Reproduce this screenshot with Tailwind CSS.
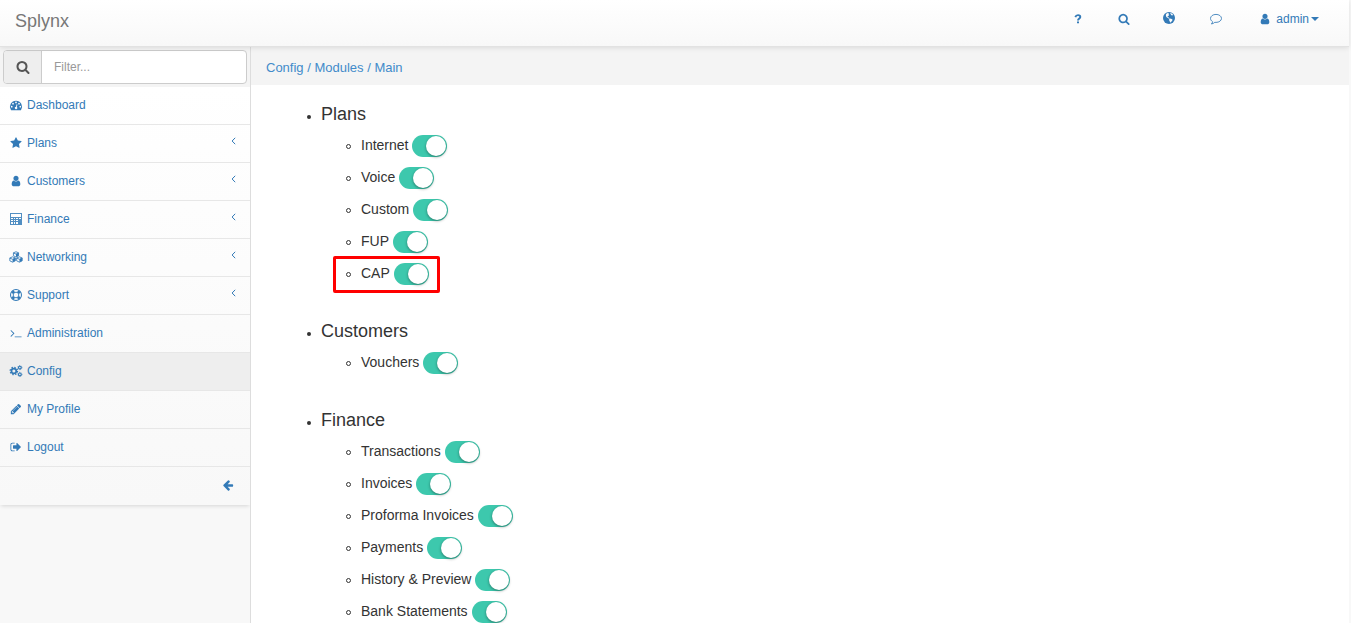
<!DOCTYPE html>
<html lang="en">
<head>
<meta charset="utf-8">
<title>Splynx</title>
<script src="https://cdn.jsdelivr.net/npm/@tailwindcss/browser@4"></script>
</head>
<body class="h-[623px] overflow-hidden bg-[#f8f8f8] font-['Liberation_Sans',Arial,sans-serif] text-[14px] leading-5 text-[#333]">
<svg class="hidden">
  <symbol id="search" viewBox="0 0 1792 1792"><path d="M1216 832q0-185-131.5-316.5t-316.5-131.5-316.5 131.5-131.5 316.5 131.5 316.5 316.5 131.5 316.5-131.5 131.5-316.5zm512 832q0 52-38 90t-90 38q-54 0-90-38l-343-342q-179 124-399 124-143 0-273.5-55.5t-225-150-150-225-55.5-273.5 55.5-273.5 150-225 225-150 273.5-55.5 273.5 55.5 225 150 150 225 55.5 273.5q0 220-124 399l343 343q37 37 37 90z"/></symbol>
  <symbol id="star" viewBox="0 0 1792 1792"><path d="M1728 647q0 22-26 48l-363 354 86 500q1 7 1 20 0 21-10.5 35.5t-30.5 14.5q-19 0-40-12l-449-236-449 236q-22 12-40 12-21 0-31.5-14.5t-10.5-35.5q0-6 2-20l86-500-364-354q-25-27-25-48 0-37 56-46l502-73 225-455q19-41 49-41t49 41l225 455 502 73q56 9 56 46z"/></symbol>
  <symbol id="user" viewBox="0 0 1792 1792"><path d="M1536 1399q0 109-62.5 187t-150.5 78h-854q-88 0-150.5-78t-62.5-187q0-85 8.5-160.5t31.5-152 58.5-131 94-89 134.5-34.5q131 128 313 128t313-128q76 0 134.5 34.5t94 89 58.5 131 31.5 152 8.5 160.5zm-256-887q0 159-112.5 271.5t-271.5 112.5-271.5-112.5-112.5-271.5 112.5-271.5 271.5-112.5 271.5 112.5 112.5 271.5z"/></symbol>
  <symbol id="left" viewBox="0 0 1792 1792"><path d="M1664 896v128q0 53-32.5 90.5t-84.5 37.5h-704l293 294q38 36 38 90t-38 90l-75 76q-37 37-90 37-52 0-91-37l-651-652q-37-37-37-90 0-52 37-91l651-650q38-38 91-38 52 0 90 38l75 74q38 38 38 91t-38 91l-293 293h704q52 0 84.5 37.5t32.5 90.5z"/></symbol>
  <symbol id="pencil" viewBox="0 0 1792 1792"><path d="M491 1536l91-91-235-235-91 91v107h128v128h107zm523-928q0-22-22-22-10 0-17 7l-542 542q-7 7-7 17 0 22 22 22 10 0 17-7l542-542q7-7 7-17zm-54-192l416 416-832 832h-416v-416zm683 96q0 53-37 90l-166 166-416-416 166-165q36-38 90-38 53 0 91 38l235 234q37 39 37 91z"/></symbol>
  <symbol id="logout" viewBox="0 0 1792 1792"><path d="M704 1440q0 4 1 20t.5 26.5-3 23.5-10 19.5-20.5 6.5h-320q-119 0-203.5-84.5t-84.5-203.500v-704q0-119 84.500-203.500t203.500-84.500h320q13 0 22.500 9.500t9.500 22.500q0 4 1 20t.5 26.500-3 23.500-10 19.500-20.500 6.500h-320q-66 0-113 47t-47 113v704q0 66 47 113t113 47h312l11.500 1 11.500 3 8 5.500 7 9 2 13.500zm928-544q0 26-19 45l-544 544q-19 19-45 19t-45-19-19-45v-288h-448q-26 0-45-19t-19-45v-384q0-26 19-45t45-19h448v-288q0-26 19-45t45-19 45 19l544 544q19 19 19 45z"/></symbol>
  <symbol id="terminal" viewBox="0 0 1792 1792"><path d="M649 983l-466 466q-10 10-23 10t-23-10l-50-50q-10-10-10-23t10-23l393-393-393-393q-10-10-10-23t10-23l50-50q10-10 23-10t23 10l466 466q10 10 10 23t-10 23zm1079 457v64q0 14-9 23t-23 9h-960q-14 0-23-9t-9-23v-64q0-14 9-23t23-9h960q14 0 23 9t9 23z"/></symbol>
  <symbol id="dash" viewBox="0 0 14 14"><path fill-rule="evenodd" d="M7 2a7 7 0 0 0-5.900 10.800q.2.200.5.200h10.800q.3 0 .5-.2A7 7 0 0 0 7 2zM2 8a1 1 0 1 0 0 2 1 1 0 0 0 0-2zm1.500-3.500a1 1 0 1 0 0 2 1 1 0 0 0 0-2zM7 3a1 1 0 1 0 0 2 1 1 0 0 0 0-2zm3.500 1.500a1 1 0 1 0 0 2 1 1 0 0 0 0-2zM12 8a1 1 0 1 0 0 2 1 1 0 0 0 0-2zM7.700 6.200 7 8.900a1.500 1.500 0 1 0 1 .3l.7-2.700z"/></symbol>
  <symbol id="calc" viewBox="0 0 12 12"><path fill-rule="evenodd" d="M0 0h12v12H0zM1 1v3h10V1zM1 5v1h2V5zM4 5v1h1V5zM6 5v1h2V5zM9 5v1h2V5zM1 7v1h2V7zM4 7v1h1V7zM6 7v1h2V7zM1 9v2h2V9zM4 9v2h1V9zM6 9v2h2V9z" opacity=".85"/></symbol>
  <symbol id="cubes" viewBox="0 0 16 14"><g fill="none" stroke="currentColor" stroke-width="1" stroke-linejoin="round"><path d="M8 .9l3 1.200v3.400L8 7 5 5.500V2.100zM4 6.800l3.200 1.300v3.400L4 13 .8 11.500V8.100zM12 6.800l3.200 1.300v3.400L12 13l-3.200-1.500V8.100z"/><path d="M5 2.300l3 1.300 3-1.300M.8 8.300L4 9.600l3.200-1.300M8.800 8.300l3.200 1.300 3.200-1.300"/><path stroke="none" fill="currentColor" d="M8 3.600l3-1.300v3.200L8 7zM4 9.600l3.200-1.300v3.200L4 13zM12 9.600l3.200-1.300v3.200L12 13z"/></g></symbol>
  <symbol id="life" viewBox="0 0 14 14"><g fill="none" stroke="currentColor"><circle cx="7" cy="7" r="6.400" stroke-width="1.200"/><circle cx="7" cy="7" r="3.300" stroke-width="1.100"/><path stroke-width="3.400" d="M2.700 2.700l1.900 1.900M11.300 2.700L9.400 4.600M2.700 11.300l1.900-1.900M11.300 11.300L9.400 9.400"/></g></symbol>
  <symbol id="cogs" viewBox="0 0 15 14"><g fill="none" stroke="currentColor"><circle cx="5" cy="7" r="2.800" stroke-width="2"/><circle cx="5" cy="7" r="4.300" stroke-width="1.500" stroke-dasharray="1.690"/><circle cx="12" cy="3" r="1.600" stroke-width="1.300"/><circle cx="12" cy="3" r="2.400" stroke-width="1" stroke-dasharray=".94"/><circle cx="12" cy="11" r="1.600" stroke-width="1.300"/><circle cx="12" cy="11" r="2.400" stroke-width="1" stroke-dasharray=".94"/></g></symbol>
  <symbol id="globe" viewBox="0 0 12 12"><circle cx="6" cy="6" r="6"/><path fill="#fcfcfc" d="M3.300 1.700l1.500-.6 1.200.3-.6.9.8.500-.6 1-1 .4.100.8 1.100.5.800 1.100-.9-.1-1.200-.8L3.300 4.900 2.800 3zM7 1.100l1.800.5 1.300 1.200-.8.700-.9-.2-.5-.9zM6.600 6.500l1.500.2 1.400.9-.3 1.200-1.200 1.100-.8.900-.5-1.500-.7-1.300z"/></symbol>
  <symbol id="comment" viewBox="0 0 12 12"><path fill="none" stroke="currentColor" stroke-width=".85" stroke-linejoin="round" d="M6 1.400c3.100 0 5.500 1.800 5.500 4s-2.400 4-5.500 4l-1.200-.1C3.900 10.200 2.900 10.700 1.400 11c.7-.7 1.100-1.400 1.200-2.300C1.300 7.900.5 6.700.5 5.400c0-2.200 2.400-4 5.500-4z"/></symbol>
  <symbol id="question" viewBox="0 0 8 10"><path fill="none" stroke="currentColor" stroke-width="1.900" d="M1.300 3.100C1.800 1.700 2.700 1.100 4 1.100c1.500 0 2.300.8 2.300 1.800C6.300 4.400 4 4.500 4 6.400"/><path d="M3 7.400h2v1.900H3z"/></symbol>
  <symbol id="angle" viewBox="0 0 5 8"><path fill="none" stroke="currentColor" stroke-width="1" d="M4.200.8L1.100 4l3.100 3.200"/></symbol>
</svg>

<header class="relative z-10 flex h-[47px] w-[1349px] border-b border-[#e2e2e2] bg-linear-to-b from-white to-[#f8f8f8] shadow-[0_1px_5px_rgba(0,0,0,0.1)]">
  <div class="pl-[15px] pt-[11px] text-[18px] leading-5 text-[#777]">Splynx</div>
  <nav class="ml-auto flex pr-[30px] pt-[9px] text-[12px] leading-5 text-[#337ab7]">
    <svg class="mr-[36px] mt-[5px] h-[10px] w-2 fill-current"><use href="#question"/></svg>
    <svg class="mr-[33px] mt-[4px] size-[12px] fill-current"><use href="#search"/></svg>
    <svg class="mr-[35px] mt-[3px] size-[12px] fill-current"><use href="#globe"/></svg>
    <svg class="mr-[37px] mt-[4px] size-[12px] fill-current"><use href="#comment"/></svg>
    <svg class="mr-[5px] mt-[4px] size-[12px] fill-current"><use href="#user"/></svg>
    <span>admin</span>
    <span class="ml-[2px] mt-2 h-0 w-0 border-x-4 border-t-4 border-x-transparent border-t-current"></span>
  </nav>
</header>

<div class="flex h-[576px]">
  <aside class="w-[250px] shrink-0">
    <div class="relative h-[40px] bg-[#f4f4f4] pl-[3px] pt-[3px]">
      <div class="flex h-[34px] w-[244px] overflow-hidden rounded border border-[#ccc] bg-white">
        <span class="flex w-[38px] items-center justify-center border-r border-[#ccc] bg-[#eee] text-[#555]"><svg class="size-[14px] fill-current"><use href="#search"/></svg></span>
        <span class="pl-3 pt-[6px] text-[12px] leading-5 text-[#999]">Filter...</span>
      </div>
    </div>
    <ul id="menu" class="bg-linear-to-b from-white to-[#f8f8f8] text-[12px] leading-5 text-[#337ab7] shadow-[0_2px_4px_-1px_rgba(0,0,0,0.14)]"></ul>
  </aside>
  <main class="w-[1099px] border-l border-[#ddd] bg-white">
    <div class="h-[38px] bg-[#f4f4f4] pl-[15px] pt-[11px] text-[13px] leading-5 text-[#428bca]">Config / Modules / Main</div>
    <div id="modules" class="pl-[70px] pt-[19px]"></div>
  </main>
</div>

<script>
const menu = [['dash','Dashboard',0],['star','Plans',1],['user','Customers',1],['calc','Finance',1],['cubes','Networking',1],['life','Support',1],['terminal','Administration',0],['cogs','Config',0],['pencil','My Profile',0],['logout','Logout',0]];
document.getElementById('menu').innerHTML = menu.map(([icon, label, sub]) => `
  <li class="flex h-[38px] items-start border-b border-[#e7e7e7] pl-2 pr-[14px] pt-2 ${label === 'Config' ? 'bg-[#eee]' : ''}">
    <svg class="mr-[3px] mt-[4px] h-[12px] w-[16px] fill-current"><use href="#${icon}"/></svg><span>${label}</span>
    ${sub ? '<svg class="ml-auto mt-[4px] h-[8px] w-[5px]"><use href="#angle"/></svg>' : ''}
  </li>`).join('') + '<li class="flex h-[38px] justify-end pr-[16px] pt-[12px]"><svg class="size-[12px] fill-current"><use href="#left"/></svg></li>';

const groups = [['Plans',['Internet','Voice','Custom','FUP','CAP']],['Customers',['Vouchers']],['Finance',['Transactions','Invoices','Proforma Invoices','Payments','History &amp; Preview','Bank Statements']]];
document.getElementById('modules').innerHTML = groups.map(([title, items]) => `
  <section class="mb-[32px]">
    <h4 class="relative mb-[5px] text-[18px] leading-5"><i class="absolute left-[-14px] top-[11px] size-[4px] rounded-full bg-[#333]"></i>${title}</h4>
    ${items.map(t => `<div class="relative flex h-8 items-start pl-10 pt-[6px]"><i class="absolute left-[25px] top-[15px] size-[5px] rounded-full border border-[#333]"></i>
      <span class="leading-5">${t}</span><span class="ml-1 flex h-[22px] w-[35px] justify-end rounded-full bg-[#3dc8ad] p-px"><b class="size-[20px] rounded-full bg-white shadow-[0_1px_3px_rgba(0,0,0,0.4)]"></b></span>
      ${t === 'CAP' ? '<span class="absolute left-[12px] top-[-1px] h-[37px] w-[107px] rounded-[2px] border-3 border-[#f00]"></span>' : ''}
    </div>`).join('')}
  </section>`).join('');
</script>
</body>
</html>
